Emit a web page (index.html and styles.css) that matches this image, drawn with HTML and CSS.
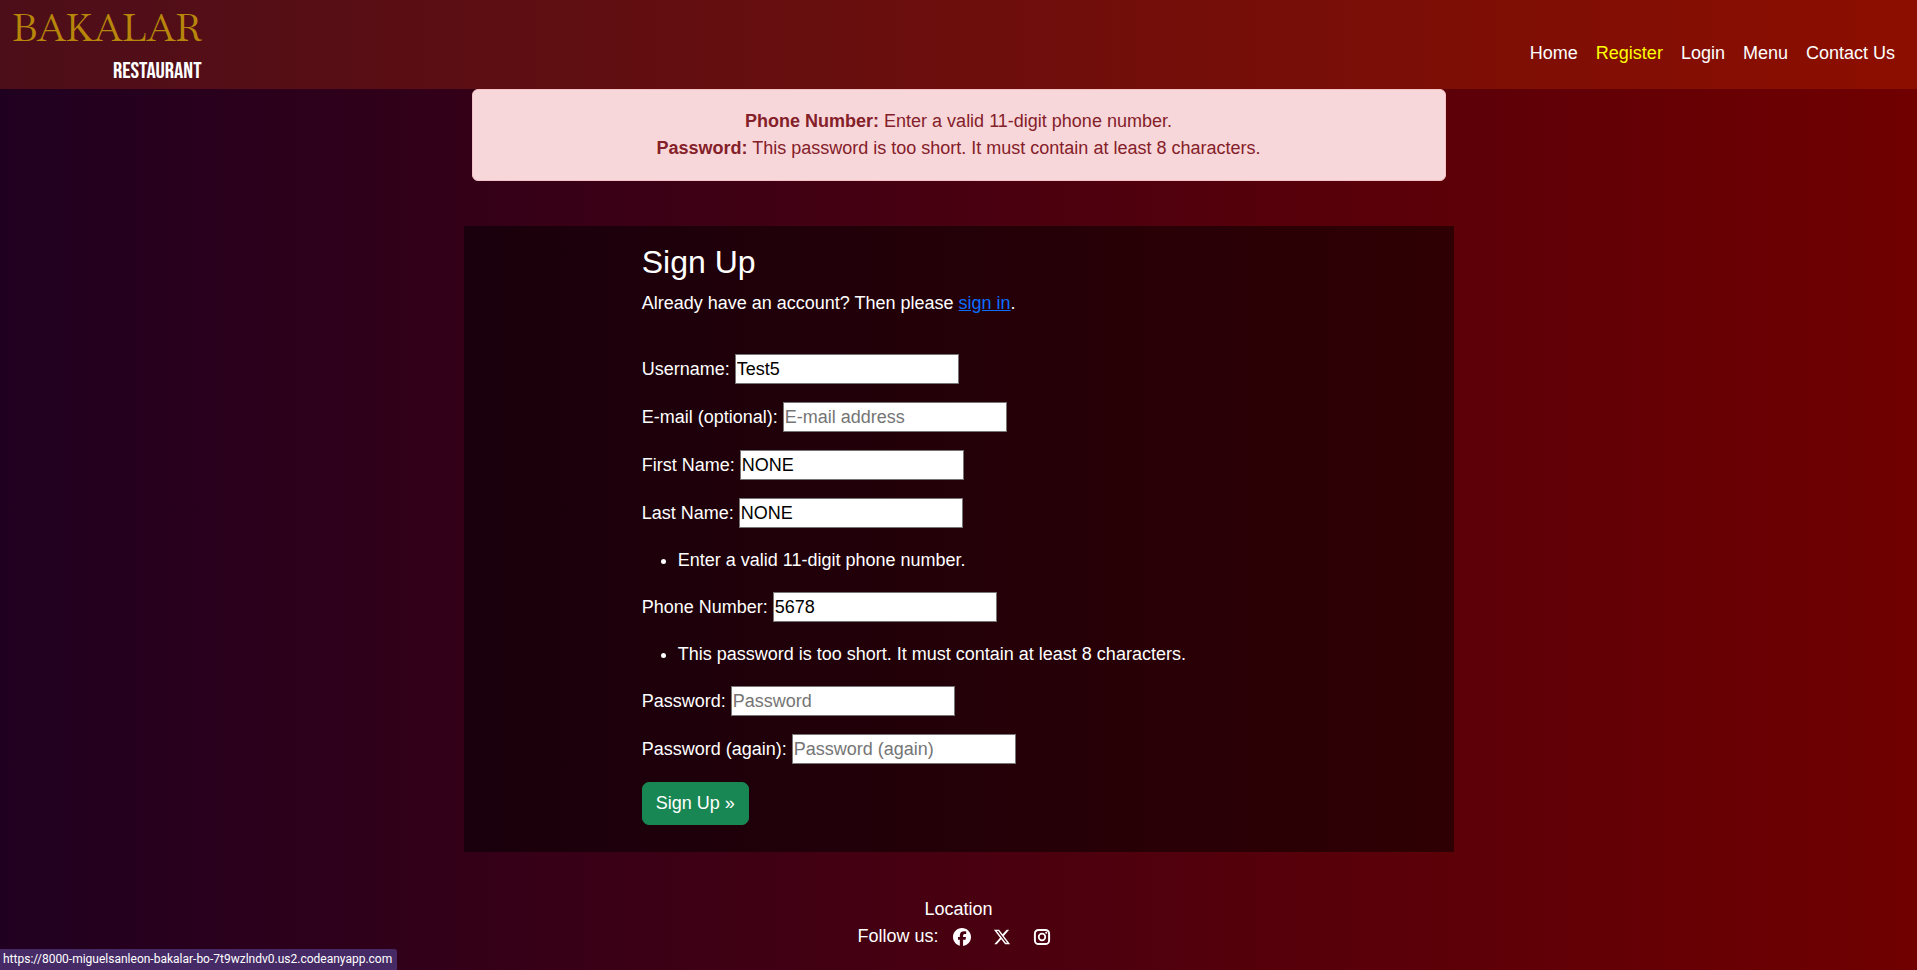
FILE: index.html
```
<!DOCTYPE html>
<html lang="en">
<head>
<meta charset="utf-8">
<meta name="viewport" content="width=device-width, initial-scale=1">
<title>Bakalar Restaurant - Sign Up</title>
<link rel="stylesheet" href="styles.css">
</head>
<body>
<header class="header">
  <a class="brand" href="#">
    <span class="brand-name">BAKALAR</span>
    <span class="brand-type">RESTAURANT</span>
  </a>
  <nav class="nav" aria-label="Main">
    <a href="#">Home</a>
    <a class="active" href="#" aria-current="page">Register</a>
    <a href="#">Login</a>
    <a href="#">Menu</a>
    <a href="#">Contact Us</a>
  </nav>
</header>

<main class="main">
  <div class="alert" role="alert">
    <p><strong>Phone Number:</strong> Enter a valid 11-digit phone number.</p>
    <p><strong>Password:</strong> This password is too short. It must contain at least 8 characters.</p>
  </div>

  <section class="panel">
    <h1>Sign Up</h1>
    <p class="intro">Already have an account? Then please <a href="#">sign in</a>.</p>
    <form class="form">
      <div class="field"><label for="username">Username:</label><input id="username" type="text" value="Test5"></div>
      <div class="field"><label for="email">E-mail (optional):</label><input id="email" type="email" placeholder="E-mail address"></div>
      <div class="field"><label for="first">First Name:</label><input id="first" type="text" value="NONE"></div>
      <div class="field"><label for="last">Last Name:</label><input id="last" type="text" value="NONE"></div>
      <ul class="errors"><li>Enter a valid 11-digit phone number.</li></ul>
      <div class="field"><label for="phone">Phone Number:</label><input id="phone" type="text" value="5678"></div>
      <ul class="errors"><li>This password is too short. It must contain at least 8 characters.</li></ul>
      <div class="field"><label for="password">Password:</label><input id="password" type="password" placeholder="Password"></div>
      <div class="field"><label for="password2">Password (again):</label><input id="password2" type="password" placeholder="Password (again)"></div>
      <button class="submit" type="submit">Sign Up »</button>
    </form>
  </section>
</main>

<footer class="footer">
  <a href="#">Location</a>
  <div class="social">
    <span>Follow us:</span>
    <a href="#" aria-label="Facebook"><svg viewBox="0 0 512 512"><path d="M512 256C512 114.600 397.400 0 256 0S0 114.600 0 256c0 120 82.700 220.800 194.200 248.500V334.200h-52.800V256h52.800v-33.700c0-87.100 39.400-127.500 125-127.500 16.200 0 44.200 3.200 55.700 6.400V172c-6-.6-16.500-1-29.600-1-42 0-58.200 15.900-58.200 57.200V256h83.600l-14.400 78.200h-69.300v175.900C413.800 494.800 512 386.900 512 256z"/></svg></a>
    <a href="#" aria-label="X"><svg viewBox="0 0 512 512"><path d="M389.200 48h70.600L305.600 224.200 487 464H345L233.700 318.600 106.500 464H35.800l164.900-188.500L26.800 48h145.600l100.500 132.900zm-24.800 373.800h39.100L151.100 88h-42z"/></svg></a>
    <a href="#" aria-label="Instagram"><svg viewBox="0 0 512 512"><path fill-rule="evenodd" d="M160 26h192a134 134 0 0 1 134 134v192a134 134 0 0 1-134 134H160A134 134 0 0 1 26 352V160A134 134 0 0 1 160 26zm0 56a78 78 0 0 0-78 78v192a78 78 0 0 0 78 78h192a78 78 0 0 0 78-78V160a78 78 0 0 0-78-78zM256 138a118 118 0 1 1 0 236 118 118 0 0 1 0-236zm0 50a68 68 0 1 0 0 136 68 68 0 0 0 0-136z"/><circle cx="376" cy="136" r="30"/></svg></a>
  </div>
</footer>

<div class="status">https://8000-miguelsanleon-bakalar-bo-7t9wzlndv0.us2.codeanyapp.com</div>
</body>
</html>
```
FILE: styles.css
```
*, *::before, *::after { box-sizing: border-box; }

body {
  margin: 0;
  min-height: 100vh;
  background: linear-gradient(to right, #200020, #700000);
  color: #fff;
  font-family: "Liberation Sans", Arial, sans-serif;
  font-size: 18px;
  line-height: 27px;
}

h1, p, ul { margin: 0; }

.header {
  display: flex;
  justify-content: space-between;
  align-items: center;
  padding: 3px 22px 0 12px;
  background: rgba(255, 69, 0, 0.2);
}

.brand {
  display: flex;
  flex-direction: column;
  align-items: flex-end;
  text-decoration: none;
}

.brand-name {
  color: #b8860b;
  font-family: "Baskervville", "Liberation Serif", serif;
  font-size: 38px;
  line-height: 50px;
}

.brand-type {
  color: #fff;
  font-family: "Bebas Neue", "Liberation Sans", sans-serif;
  font-size: 23px;
  font-weight: 400;
  line-height: 36px;
}

.nav {
  display: flex;
  gap: 18px;
  padding-top: 15px;
}

.nav a { color: #fff; text-decoration: none; }
.nav a.active { color: #ff0; }

.main {
  width: 990px;
  max-width: 100%;
  margin: 0 auto;
}

.alert {
  margin: 0 8px 45px;
  padding: 18px;
  background: #f8d7da;
  border: 1px solid #f5c2c7;
  border-radius: 6px;
  color: #842029;
  text-align: center;
}

.panel {
  padding: 17px 18% 27px;
  background: rgba(0, 0, 0, 0.5);
}

.panel h1 {
  font-size: 32px;
  font-weight: 400;
  line-height: 38px;
}

.intro { padding: 9px 0 37px; }
.intro a { color: #0d6efd; }

.form {
  display: flex;
  flex-direction: column;
  align-items: flex-start;
  gap: 18px;
}

.field {
  display: flex;
  align-items: center;
  gap: 5px;
}

.field input {
  width: 224px;
  height: 30px;
  padding: 1px;
  border: 1px solid #767676;
  border-radius: 0;
  background: #fff;
  color: #000;
  font: inherit;
}

.field input::placeholder { color: #757575; }

.errors {
  padding-left: 36px;
  line-height: 28px;
}

.submit {
  padding: 7px 13px;
  border: 1px solid #198754;
  border-radius: 7px;
  background: #198754;
  color: #fff;
  font: inherit;
}

.footer {
  display: flex;
  flex-direction: column;
  align-items: center;
  padding-top: 44px;
}

.footer a { color: #fff; text-decoration: none; }

.social {
  display: flex;
  align-items: center;
  gap: 22px;
  padding-right: 9px;
}

.social span { margin-right: -8px; }

.social svg {
  display: block;
  width: 18px;
  height: 18px;
  fill: currentColor;
}

.status {
  position: fixed;
  left: 0;
  bottom: 0;
  padding: 2px 5px 3px 3px;
  border-top-right-radius: 3px;
  background: #462a66;
  font-family: "Segoe UI", Roboto, sans-serif;
  font-size: 12px;
  line-height: 16px;
}
```
